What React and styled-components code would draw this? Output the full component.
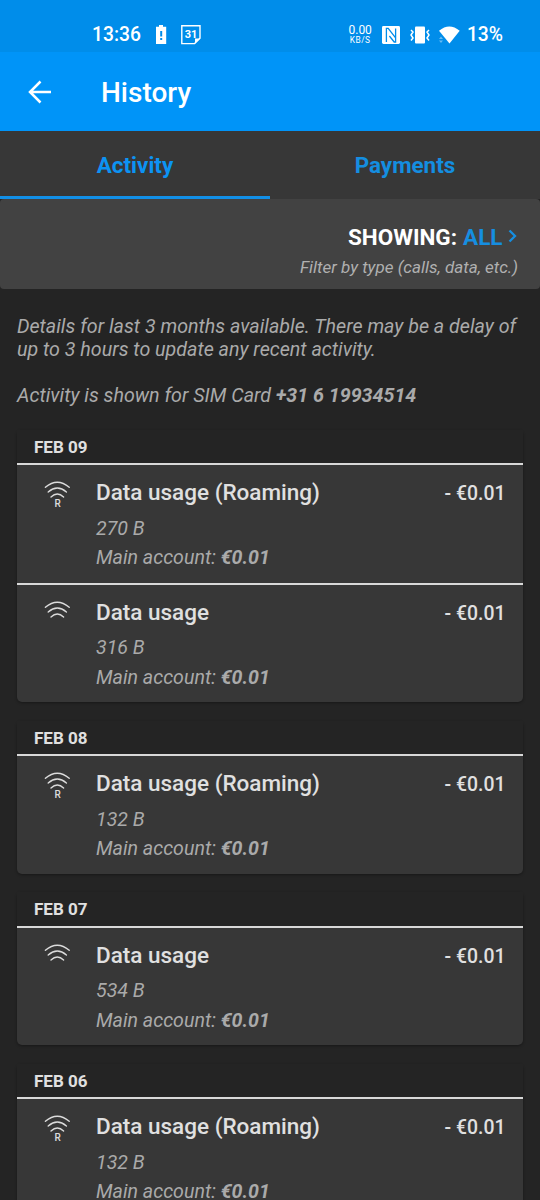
import { useState } from "react";
import styled, { createGlobalStyle } from "styled-components";

const GlobalStyle = createGlobalStyle`
  * {
    box-sizing: border-box;
  }
  body {
    margin: 0;
    background-color: #242424;
    font-family: Roboto, "Liberation Sans", sans-serif;
    color: #e0e0e0;
  }
`;

const Screen = styled.div`
  width: 540px;
  height: 1200px;
  overflow: hidden;
  display: flex;
  flex-direction: column;
  background-color: #242424;
`;

const StatusBar = styled.div`
  flex: none;
  height: 52px;
  padding: 17px 37px 0 92px;
  display: flex;
  align-items: center;
  background-color: #008dea;
  color: white;
  font-size: 20px;
  font-weight: 500;
  svg {
    display: block;
    flex: none;
  }
  .status-time {
    width: 63px;
    font-size: 19.3px;
  }
  .status-calendar {
    margin-left: 13px;
    margin-right: auto;
  }
  .status-vibrate {
    margin-left: 10px;
  }
  .status-wifi {
    margin-left: 8px;
  }
  .status-percent {
    margin-left: 7px;
    font-size: 19.3px;
  }
`;

const NetSpeed = styled.div`
  display: flex;
  flex-direction: column;
  align-items: center;
  font-weight: 400;
  font-size: 12px;
  line-height: 11px;
  margin-right: 10px;
  small {
    font-size: 8.3px;
    line-height: 8px;
    letter-spacing: 0.5px;
  }
`;

const AppBar = styled.header`
  flex: none;
  height: 79px;
  padding: 3px 28px 0;
  display: flex;
  align-items: center;
  background-color: #0094f8;
  color: white;
  button {
    border: none;
    background: none;
    color: white;
    padding: 0 0 3px;
    width: 73px;
    cursor: pointer;
  }
  svg {
    display: block;
  }
  h1 {
    margin: 0;
    font-size: 28px;
    line-height: 34px;
    font-weight: 500;
  }
`;

const Tabs = styled.nav`
  flex: none;
  height: 68px;
  display: flex;
  background-color: #373737;
`;

const Tab = styled.button`
  flex: 1;
  border: none;
  border-bottom: 3px solid ${(props) => (props.$active ? "#128fe6" : "transparent")};
  background: none;
  padding: 3px 0 0;
  color: ${(props) => (props.$active ? "#0c93f3" : "#148ee0")};
  font-family: inherit;
  font-size: 22.4px;
  font-weight: 700;
  cursor: pointer;
`;

const FilterBar = styled.div`
  flex: none;
  height: 90px;
  padding: 23px 22px 0 0;
  border-radius: 4px;
  background-color: #424242;
  text-align: right;
  .filter-title {
    display: flex;
    justify-content: flex-end;
    align-items: center;
    height: 30px;
    font-size: 22.5px;
    font-weight: 700;
    color: white;
  }
  .filter-title span {
    margin-left: 6px;
    color: #168ee0;
  }
  .filter-title svg {
    margin-left: 5px;
    margin-right: 1.5px;
    margin-bottom: 2px;
  }
  .filter-hint {
    margin-top: 4px;
    font-size: 17.05px;
    line-height: 22px;
    font-style: italic;
    color: #b0b0b0;
  }
`;

const Notice = styled.p`
  flex: none;
  margin: 26px 17px 22.5px;
  font-size: 19.66px;
  line-height: 23px;
  font-style: italic;
  color: #aaaaaa;
  white-space: pre-line;
`;

const Card = styled.section`
  flex: none;
  margin: 0 17px 18.5px;
  border-radius: 5px;
  background-color: #373737;
  box-shadow: 0 1px 3px rgba(0, 0, 0, 0.35);
  h2 {
    margin: 0;
    height: 33.5px;
    padding: 7px 17px 0;
    background-color: #242424;
    font-size: 17px;
    line-height: 20px;
    font-weight: 700;
  }
`;

const Row = styled.article`
  height: 119.5px;
  padding: 12px 17.5px 0 27px;
  border-top: 2px solid #d8d8d8;
  display: flex;
  .row-icon {
    width: 52px;
    padding-top: 4px;
  }
  .row-text {
    flex: 1;
    font-size: 19.6px;
    line-height: 29.5px;
    font-style: italic;
    color: #aaaaaa;
  }
  h3 {
    margin: 0 0 5.5px;
    font-size: 22.5px;
    line-height: 31px;
    font-weight: 500;
    font-style: normal;
    color: #e0e0e0;
  }
  .row-price {
    font-size: 19.4px;
    line-height: 33px;
    font-weight: 500;
  }
`;

const BatteryAlert = () => (
  <svg width="13" height="20" viewBox="0 0 13 20">
    <path fill="white" fillRule="evenodd" d="M4 0h4v1.8h3.2V19H1V1.8h3zM5.2 6v5.5h2V6zm0 7v2h2v-2z" />
  </svg>
);

const CalendarIcon = () => (
  <svg className="status-calendar" width="20" height="20" viewBox="0 0 20 20">
    <path d="M.8 .8h18.2v12.4l-5.4 5.4H.8z" fill="none" stroke="white" strokeWidth="1.4" />
    <path d="M14 18.5v-5h5z" fill="white" />
    <text x="10" y="13.3" textAnchor="middle" fontSize="11" fontWeight="700" fill="white">31</text>
  </svg>
);

const NfcIcon = () => (
  <svg width="18" height="18" viewBox="0 0 18 18">
    <rect width="18" height="18" rx="1.4" fill="white" />
    <path
      d="M4.4 16V2.4h1.8l7.4 9.4V2.6M13.6 2.6V16h-1.4L7.4 10"
      fill="none"
      stroke="#008dea"
      strokeWidth="1.3"
    />
  </svg>
);

const VibrateIcon = () => (
  <svg className="status-vibrate" width="20" height="18" viewBox="0 0 20 18">
    <rect x="5" y="0.5" width="10" height="17" rx="1" fill="white" />
    <path
      d="M1 4l2 2-2 3 2 3-2 2.5M19 4l-2 2 2 3-2 3 2 2.5"
      fill="none"
      stroke="white"
      strokeWidth="1.5"
    />
  </svg>
);

const WifiIcon = () => (
  <svg className="status-wifi" width="22" height="18" viewBox="0 0 22 18">
    <path d="M1 4.8Q11.3-4 21.7 4.8L11.5 17.5z" fill="white" />
    <path d="M1 13l2-2.5L5 13zM1 14.5h4L3 17z" fill="white" opacity=".4" />
  </svg>
);

const BackArrow = () => (
  <svg width="24" height="24" viewBox="0 0 24 24">
    <path d="M12.5 1.5L2 12l10.5 10.5M2 12h21" fill="none" stroke="white" strokeWidth="2.5" />
  </svg>
);

const DataIcon = ({ roaming }) => (
  <svg width="28" height="28" viewBox="0 0 28 28">
    <g fill="none" stroke="#dcdcdc" strokeWidth="1.4" strokeLinecap="round">
      <path d="M1.4 6.2Q13.3-3.8 25.2 6.2" />
      <path d="M4.2 11Q13.3 3.2 22.4 11" />
      <path d="M7 16Q13.3 10 19.6 16" />
    </g>
    {roaming && (
      <text x="13.7" y="26" textAnchor="middle" fontSize="10" fontWeight="500" fill="#dcdcdc">R</text>
    )}
  </svg>
);

const days = [
  {
    date: "FEB 09",
    items: [
      { roaming: true, size: "270 B" },
      { roaming: false, size: "316 B" },
    ],
  },
  { date: "FEB 08", items: [{ roaming: true, size: "132 B" }] },
  { date: "FEB 07", items: [{ roaming: false, size: "534 B" }] },
  { date: "FEB 06", items: [{ roaming: true, size: "132 B" }] },
];

const App = () => {
  const [tab, setTab] = useState("Activity");

  return (
    <>
      <GlobalStyle />
      <Screen>
        <StatusBar>
          <div className="status-time">13:36</div>
          <BatteryAlert />
          <CalendarIcon />
          <NetSpeed>
            0.00<small>KB/S</small>
          </NetSpeed>
          <NfcIcon />
          <VibrateIcon />
          <WifiIcon />
          <div className="status-percent">13%</div>
        </StatusBar>
        <AppBar>
          <button aria-label="Back">
            <BackArrow />
          </button>
          <h1>History</h1>
        </AppBar>
        <Tabs>
          {["Activity", "Payments"].map((name) => (
            <Tab key={name} $active={tab === name} onClick={() => setTab(name)}>
              {name}
            </Tab>
          ))}
        </Tabs>
        <FilterBar>
          <div className="filter-title">
            SHOWING: <span>ALL</span>
            <svg width="9" height="14" viewBox="0 0 9 14">
              <path d="M1.5 1.5L7 7l-5.5 5.5" fill="none" stroke="#168ee0" strokeWidth="2.3" />
            </svg>
          </div>
          <div className="filter-hint">Filter by type (calls, data, etc.)</div>
        </FilterBar>
        <Notice>
          Details for last 3 months available. There may be a delay of{"\n"}
          up to 3 hours to update any recent activity.{"\n\n"}
          Activity is shown for SIM Card <b>+31 6 19934514</b>
        </Notice>
        {days.map((day) => (
          <Card key={day.date}>
            <h2>{day.date}</h2>
            {day.items.map((item) => (
              <Row key={item.size}>
                <div className="row-icon">
                  <DataIcon roaming={item.roaming} />
                </div>
                <div className="row-text">
                  <h3>{item.roaming ? "Data usage (Roaming)" : "Data usage"}</h3>
                  <div>{item.size}</div>
                  <div>
                    Main account: <b>€0.01</b>
                  </div>
                </div>
                <div className="row-price">- €0.01</div>
              </Row>
            ))}
          </Card>
        ))}
      </Screen>
    </>
  );
};

export default App;
